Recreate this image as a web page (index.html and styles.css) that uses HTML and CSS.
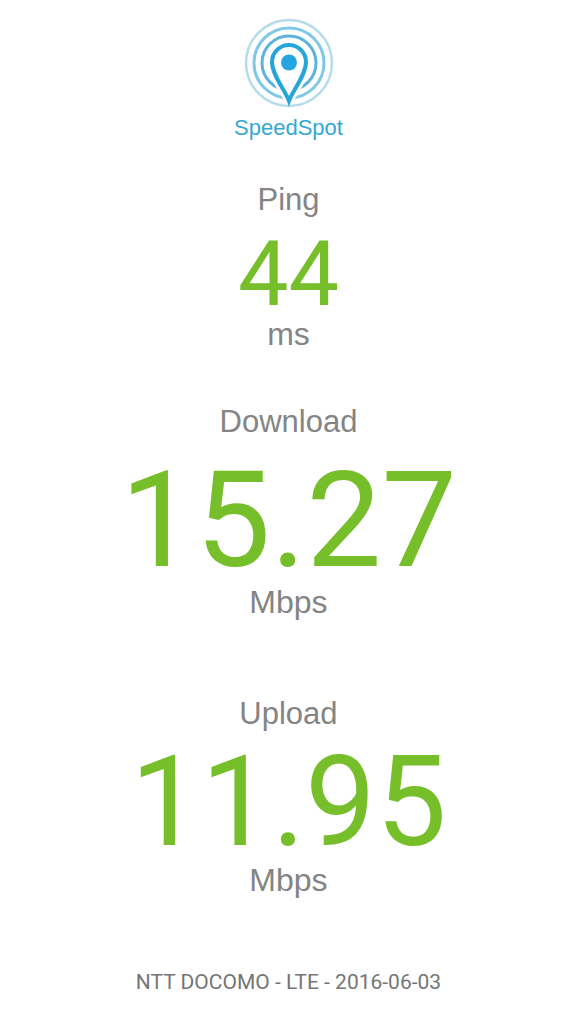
FILE: index.html
```html
<!DOCTYPE html>
<html lang="en">
<head>
<meta charset="utf-8">
<meta name="viewport" content="width=device-width, initial-scale=1">
<title>SpeedSpot</title>
<link rel="stylesheet" href="styles.css">
</head>
<body>
<main class="page">
  <header class="brand">
    <svg class="logo" viewBox="0 0 90 92" aria-hidden="true">
      <circle class="ring ring-outer" cx="45" cy="47" r="43"/>
      <circle class="ring ring-middle" cx="45" cy="47" r="35"/>
      <circle class="ring ring-inner" cx="45" cy="47" r="27"/>
      <path class="halo" d="M45 84C41 74 28 59 28 46a17 17 0 0 1 34 0C62 59 49 74 45 84Z"/>
      <path class="pin" d="M45 85C41 74 28 59 28 46a17 17 0 0 1 34 0C62 59 49 74 45 85Z"/>
      <circle class="dot" cx="45" cy="46.5" r="8"/>
    </svg>
    <h1 class="name">SpeedSpot</h1>
  </header>
  <section class="result ping">
    <h2 class="label">Ping</h2>
    <p class="value">44</p>
    <p class="unit">ms</p>
  </section>
  <section class="result download">
    <h2 class="label">Download</h2>
    <p class="value">15.27</p>
    <p class="unit">Mbps</p>
  </section>
  <section class="result upload">
    <h2 class="label">Upload</h2>
    <p class="value">11.95</p>
    <p class="unit">Mbps</p>
  </section>
  <footer class="footer">NTT DOCOMO - LTE - 2016-06-03</footer>
</main>
</body>
</html>
```

FILE: styles.css
```css
* { box-sizing: border-box; }
body { margin: 0; background: #fff; font-family: Roboto, sans-serif; }
h1, h2, p { margin: 0; font-weight: 400; }
.page { display: flex; flex-direction: column; align-items: center; padding: 16px 0; text-align: center; }
.brand { display: flex; flex-direction: column; align-items: center; }
.logo { width: 90px; height: 92px; }
.ring { fill: none; stroke-width: 3; }
.ring-outer { stroke: #b5dcea; stroke-width: 2.5; }
.ring-middle { stroke: #7fc8e6; }
.ring-inner { stroke: #5cb4dc; }
.halo { fill: #fff; stroke: #fff; stroke-width: 10; stroke-linejoin: round; }
.pin { fill: #fff; stroke: #27a5d6; stroke-width: 4; }
.dot { fill: #27a5e0; }
.name { font-family: "Liberation Sans", Arial, sans-serif; font-size: 22px; line-height: 40px; color: #35a8d4; }
.result { display: flex; flex-direction: column; align-items: center; }
.label, .unit { font-family: "Liberation Sans", Arial, sans-serif; font-size: 31px; line-height: 36px; color: #848484; }
.unit { font-size: 32px; }
.value { color: #76bf2b; }
.ping { margin-top: 34px; }
.ping .value { margin-top: 16px; font-size: 90px; line-height: 82px; }
.download { margin-top: 52px; }
.download .value { margin-top: 18px; font-size: 134px; line-height: 126px; }
.upload { margin-top: 76px; }
.upload .value { margin-top: 10px; font-size: 126px; line-height: 120px; }
.footer { margin-top: 70px; font-size: 21px; line-height: 28px; color: #757575; }
```
